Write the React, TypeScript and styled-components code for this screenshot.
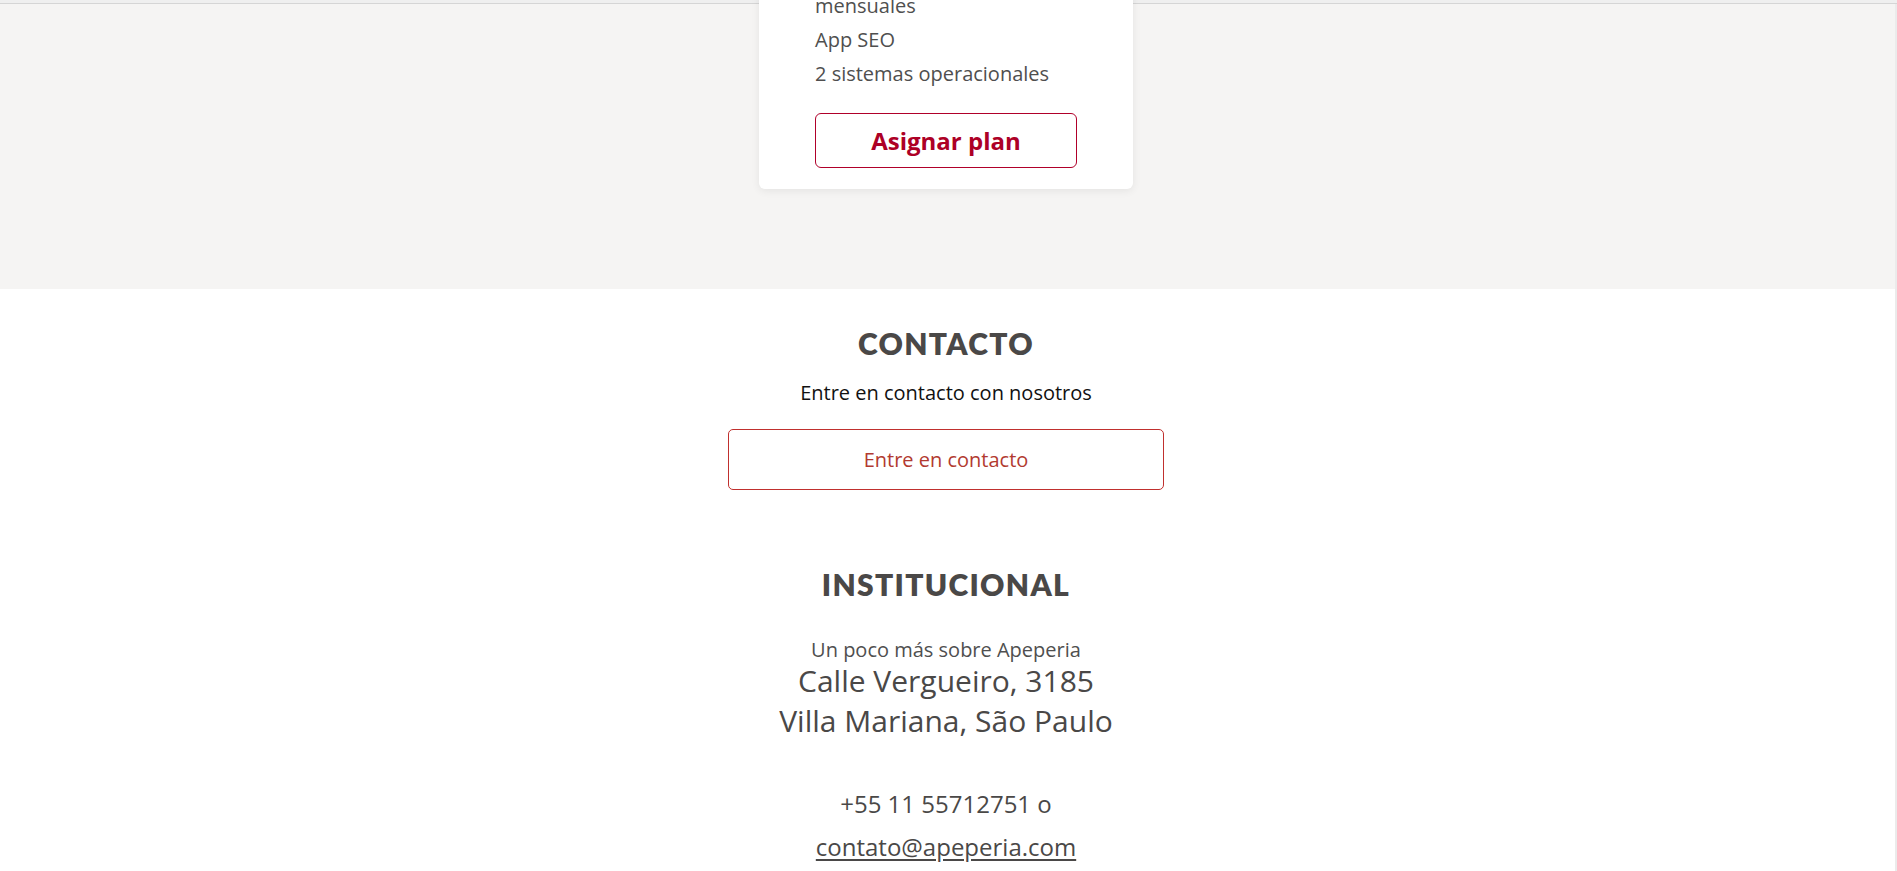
import React from "react";
import styled, { createGlobalStyle } from "styled-components";

const GlobalStyle = createGlobalStyle`
  html, body {
    margin: 0;
    padding: 0;
    background: #ffffff;
  }
  body {
    font-family: "Open Sans", "Noto Sans", sans-serif;
    overflow: hidden;
  }
  * { box-sizing: border-box; }
`;

const Page = styled.div`
  width: 1897px;
  height: 871px;
  overflow: hidden;
  display: flex;
  flex-direction: column;
`;

const TopBar = styled.div`
  height: 4px;
  flex: none;
  background: #efefef;
  border-bottom: 1px solid #d5d5d5;
`;

const Body = styled.div`
  flex: 1;
  display: flex;
  flex-direction: column;
  border-right: 2px solid #ebebeb;
  padding-right: 3px;
`;

const PlansSection = styled.section`
  background: #f5f4f3;
  margin-right: -3px;
  padding-right: 3px;
  display: flex;
  justify-content: center;
  padding-bottom: 100px;
`;

const PlanCard = styled.div`
  width: 374px;
  margin-top: -35px;
  padding: 20px 56px 21px;
  background: #ffffff;
  border-radius: 6px;
  box-shadow: 0 2px 8px rgba(0, 0, 0, 0.07);
  display: flex;
  flex-direction: column;
`;

const FeatureList = styled.ul`
  list-style: none;
  margin: 0;
  padding: 0;
`;

const Feature = styled.li`
  font-size: 20px;
  line-height: 34px;
  color: #4f4f4f;
  white-space: nowrap;
`;

const AssignButton = styled.button`
  margin-top: 22px;
  height: 55px;
  width: 100%;
  background: #ffffff;
  border: 1px solid #b0002a;
  border-radius: 6px;
  color: #ad0026;
  font-family: "Open Sans", sans-serif;
  font-weight: 700;
  font-size: 24px;
  cursor: pointer;
`;

const InfoSection = styled.section`
  display: flex;
  flex-direction: column;
  align-items: center;
  padding-top: 36px;
`;

const Heading = styled.h2<{ $gap: number }>`
  margin: 0 0 ${(p) => p.$gap}px;
  font-family: "Lato", "Inter", sans-serif;
  font-weight: 800;
  font-size: 30px;
  line-height: 36px;
  letter-spacing: 1.3px;
  color: #4a4847;
  text-transform: uppercase;
`;

const Lead = styled.p`
  margin: 0;
  font-size: 20px;
  line-height: 28px;
  color: #111111;
`;

const ContactButton = styled.button`
  margin-top: 22px;
  margin-bottom: 76px;
  width: 436px;
  height: 61px;
  background: #ffffff;
  border: 1px solid #c0302e;
  border-radius: 5px;
  color: #b23a30;
  font-family: "Open Sans", sans-serif;
  font-size: 20px;
  cursor: pointer;
`;

const Small = styled.p`
  margin: 0;
  font-size: 20px;
  line-height: 23px;
  color: #4f4f4f;
`;

const Address = styled.address`
  font-style: normal;
  font-size: 30px;
  line-height: 40px;
  color: #4a4847;
  text-align: center;
  margin-bottom: 41px;
`;

const ContactLine = styled.p`
  margin: 0;
  font-size: 24px;
  line-height: 43px;
  color: #4a4847;
  text-align: center;
`;

const Mail = styled.a`
  color: #4a4847;
  text-decoration: underline;
  text-underline-offset: 3px;
`;

export default function App() {
  return (
    <>
      <GlobalStyle />
      <Page>
        <TopBar />
        <Body>
          <PlansSection>
            <PlanCard>
              <FeatureList>
                <Feature>mensuales</Feature>
                <Feature>App SEO</Feature>
                <Feature>2 sistemas operacionales</Feature>
              </FeatureList>
              <AssignButton>Asignar plan</AssignButton>
            </PlanCard>
          </PlansSection>
          <InfoSection>
            <Heading $gap={18}>Contacto</Heading>
            <Lead>Entre en contacto con nosotros</Lead>
            <ContactButton>Entre en contacto</ContactButton>
            <Heading $gap={36}>Institucional</Heading>
            <Small>Un poco más sobre Apeperia</Small>
            <Address>
              Calle Vergueiro, 3185
              <br />
              Villa Mariana, São Paulo
            </Address>
            <ContactLine>+55 11 55712751 o</ContactLine>
            <ContactLine>
              <Mail href="#">contato@apeperia.com</Mail>
            </ContactLine>
          </InfoSection>
        </Body>
      </Page>
    </>
  );
}
